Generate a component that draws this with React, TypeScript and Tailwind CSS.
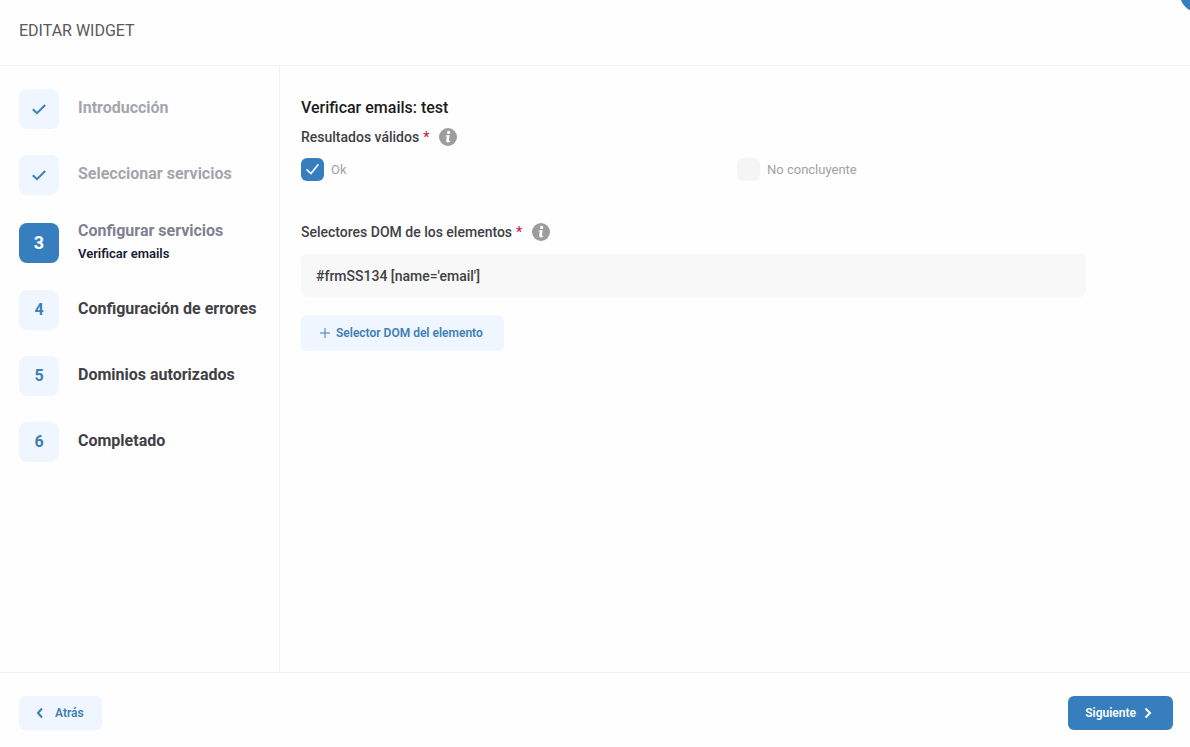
import React, { useState } from 'react';

interface Step {
  number: number;
  title: string;
  detail?: string;
}

const STEPS: Step[] = [
  { number: 1, title: 'Introducción' },
  { number: 2, title: 'Seleccionar servicios' },
  { number: 3, title: 'Configurar servicios', detail: 'Verificar emails' },
  { number: 4, title: 'Configuración de errores' },
  { number: 5, title: 'Dominios autorizados' },
  { number: 6, title: 'Completado' },
];

const CURRENT_STEP = 3;

const CheckIcon: React.FC<{ className: string }> = ({ className }) => (
  <svg viewBox="0 0 16 16" fill="none" stroke="currentColor" strokeWidth="2" className={className}>
    <path d="M1.8 8.2 L6 12.2 L14.2 4" />
  </svg>
);

const InfoIcon: React.FC<{ className: string }> = ({ className }) => (
  <svg viewBox="0 0 18 18" className={className}>
    <circle cx="9" cy="9" r="9" fill="currentColor" />
    <circle cx="9.6" cy="4.4" r="1.6" fill="white" />
    <path d="M6.6 7.4 L10.6 6.9 L9.9 12.6 Q9.9 13.2 11.3 12.8 L11.2 13.8 Q7.3 15.4 7.2 13 L7.8 8.5 L6.5 8.3 Z" fill="white" />
  </svg>
);

const StepItem: React.FC<{ step: Step }> = ({ step }) => {
  const done = step.number < CURRENT_STEP;
  const current = step.number === CURRENT_STEP;

  let titleColor = 'text-[#404145]';
  if (done) titleColor = 'text-[#a3a6ac]';
  else if (current) titleColor = 'text-[#7e8290]';

  return (
    <li className="flex items-center gap-[19px]" aria-current={current ? 'step' : undefined}>
      <span
        className={`flex size-10 shrink-0 items-center justify-center rounded-lg font-bold ${
          current ? 'bg-[#367ebe] text-lg text-white' : 'bg-[#eff6ff] text-base text-[#3d7fb4]'
        }`}
      >
        {done ? <CheckIcon className="size-4" /> : step.number}
      </span>
      <div>
        <h3 className={`mb-[3px] text-base leading-5 font-bold whitespace-nowrap ${titleColor}`}>{step.title}</h3>
        {step.detail && <p className="text-[13px] leading-5 font-semibold text-[#181c32]">{step.detail}</p>}
      </div>
    </li>
  );
};

const FieldLabel: React.FC<{ text: string }> = ({ text }) => (
  <span className="flex items-center text-sm leading-5 font-medium text-[#3f4146]">
    {text}
    <span className="ml-1 text-[#d01f48]">*</span>
    <InfoIcon className="ml-[10px] size-[18px] text-[#9d9d9d]" />
  </span>
);

const ResultOption: React.FC<{ label: string; checked: boolean; onChange: (value: boolean) => void }> = ({
  label,
  checked,
  onChange,
}) => (
  <label className="flex w-1/2 items-center gap-[7px] text-[13px] leading-5 text-[#a0a2a6]">
    <span className="relative flex size-[23px]">
      <input
        type="checkbox"
        checked={checked}
        onChange={(e) => onChange(e.target.checked)}
        className="size-[23px] appearance-none rounded-md bg-[#f5f5f5] checked:bg-[#367ebe]"
      />
      {checked && (
        <svg
          viewBox="0 0 23 23"
          fill="none"
          stroke="white"
          strokeWidth="1.6"
          strokeLinecap="round"
          strokeLinejoin="round"
          className="pointer-events-none absolute inset-0"
        >
          <path d="M6 11.8 L10 15.6 L17 6.8" />
        </svg>
      )}
    </span>
    {label}
  </label>
);

const App: React.FC = () => {
  const [ok, setOk] = useState(true);
  const [inconclusive, setInconclusive] = useState(false);
  const [selectors, setSelectors] = useState<string[]>(["#frmSS134 [name='email']"]);

  const updateSelector = (index: number, value: string) => {
    setSelectors(selectors.map((item, i) => (i === index ? value : item)));
  };

  return (
    <div className="relative flex min-h-screen flex-col overflow-hidden bg-[#fefefe] font-[Roboto,sans-serif]">
      <button
        type="button"
        aria-label="Cerrar"
        className="absolute -top-[24px] -right-[26px] size-9 rounded-full bg-[#367ebe]"
      />

      <header className="border-b border-[#efefef] px-[19px] pt-[19px] pb-[22px]">
        <h1 className="text-base leading-6 text-[#58595b]">EDITAR WIDGET</h1>
      </header>

      <div className="flex flex-1">
        <nav className="w-[280px] shrink-0 border-r border-[#f2f2f2] px-[19px] pt-[23px]">
          <ol className="flex flex-col gap-[26px]">
            {STEPS.map((step) => (
              <StepItem key={step.number} step={step} />
            ))}
          </ol>
        </nav>

        <main className="min-w-0 flex-1 pt-[30px] pr-[17px] pl-[21px]">
          <h2 className="text-base leading-6 font-medium text-[#1b1c20]">Verificar emails: test</h2>

          <fieldset className="mt-[7px]">
            <legend>
              <FieldLabel text="Resultados válidos" />
            </legend>
            <div className="mt-[11px] flex">
              <ResultOption label="Ok" checked={ok} onChange={setOk} />
              <ResultOption label="No concluyente" checked={inconclusive} onChange={setInconclusive} />
            </div>
          </fieldset>

          <div className="mt-[41px]">
            <label htmlFor="selector-0">
              <FieldLabel text="Selectores DOM de los elementos" />
            </label>
            <div className="mt-3 flex flex-col gap-3">
              {selectors.map((selector, i) => (
                <input
                  key={i}
                  id={`selector-${i}`}
                  type="text"
                  value={selector}
                  onChange={(e) => updateSelector(i, e.target.value)}
                  className="h-[43px] w-9/10 rounded-md bg-[#f8f8f8] px-[15px] text-sm font-medium text-[#404145] outline-none"
                />
              ))}
            </div>
            <button
              type="button"
              onClick={() => setSelectors([...selectors, ''])}
              className="mt-[18px] flex h-9 items-center gap-[5px] rounded-md bg-[#eff6ff] pr-[21px] pl-[18px] text-xs font-semibold text-[#3d7fb4]"
            >
              <svg viewBox="0 0 12 12" stroke="currentColor" strokeWidth="1" className="size-3">
                <path d="M6 1 V11 M1 6 H11" />
              </svg>
              Selector DOM del elemento
            </button>
          </div>
        </main>
      </div>

      <footer className="flex items-center justify-between border-t border-[#efefef] pt-[23px] pr-[17px] pb-[17px] pl-[19px]">
        <button
          type="button"
          className="flex h-[34px] items-center gap-[11px] rounded-md bg-[#eff6ff] pr-[18px] pl-[17px] text-xs font-semibold text-[#3d7fb4]"
        >
          <svg viewBox="0 0 8 12" fill="none" stroke="currentColor" strokeWidth="2" className="h-3 w-2">
            <path d="M6 1.5 L2 6 L6 10.5" />
          </svg>
          Atrás
        </button>
        <button
          type="button"
          className="flex h-[34px] items-center gap-2 rounded-md bg-[#367ebe] pr-[21px] pl-[17px] text-xs font-semibold text-white"
        >
          Siguiente
          <svg viewBox="0 0 8 12" fill="none" stroke="currentColor" strokeWidth="2" className="h-3 w-2">
            <path d="M1.5 1.5 L6 6 L1.5 10.5" />
          </svg>
        </button>
      </footer>
    </div>
  );
};

export default App;
